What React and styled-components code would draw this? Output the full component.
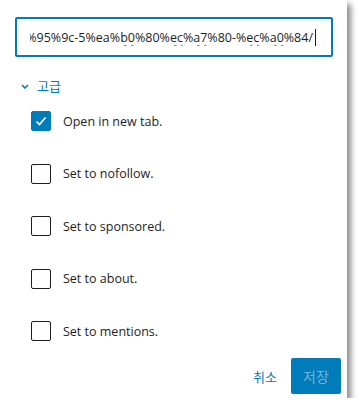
import React, { useState } from "react";
import styled, { createGlobalStyle } from "styled-components";

const GlobalStyle = createGlobalStyle`
  body {
    margin: 0;
    background: #ffffff;
    font-family: "Open Sans", "Noto Sans CJK KR", sans-serif;
    color: #1e1e1e;
  }
`;

const options = [
  { id: "newtab", label: "Open in new tab.", checked: true },
  { id: "nofollow", label: "Set to nofollow.", checked: false },
  { id: "sponsored", label: "Set to sponsored.", checked: false },
  { id: "about", label: "Set to about.", checked: false },
  { id: "mentions", label: "Set to mentions.", checked: false },
];

function App() {
  const [checked, setChecked] = useState(
    options.reduce((acc, o) => ({ ...acc, [o.id]: o.checked }), {})
  );

  return (
    <>
      <GlobalStyle />
      <Card>
        <UrlField>
          <UrlClip>
            <UrlText>
              %ec%95%9c-5%ea%<Typo>b0</Typo>%80%<Typo>ec</Typo>%<Typo>a7</Typo>%80-%
              <Typo>ec</Typo>%<Typo>a0</Typo>%84/
              <Caret />
            </UrlText>
          </UrlClip>
        </UrlField>

        <AdvancedToggle>
          <svg width="8" height="5" viewBox="0 0 8 5">
            <path d="M1 1l3 3 3-3" fill="none" stroke="#007cba" strokeWidth="1.6" />
          </svg>
          고급
        </AdvancedToggle>

        <OptionList>
          {options.map((o) => (
            <OptionRow key={o.id}>
              <CheckBox
                $checked={checked[o.id]}
                onClick={() => setChecked({ ...checked, [o.id]: !checked[o.id] })}
              >
                {checked[o.id] && (
                  <svg width="14" height="14" viewBox="0 0 14 14">
                    <path d="M2.5 7.5l3 3 6-7" fill="none" stroke="#fff" strokeWidth="1.6" />
                  </svg>
                )}
              </CheckBox>
              <OptionLabel>{o.label}</OptionLabel>
            </OptionRow>
          ))}
        </OptionList>

        <Actions>
          <TextButton>취소</TextButton>
          <PrimaryButton disabled>저장</PrimaryButton>
        </Actions>
      </Card>
    </>
  );
}

export default App;

const Card = styled.div`
  width: 347px;
  height: 398px;
  box-sizing: border-box;
  background: #fff;
  box-shadow: 4px 4px 6px rgba(0, 0, 0, 0.45);
  padding: 17px 14px 0 15px;
  display: flex;
  flex-direction: column;
`;

const UrlField = styled.div`
  height: 40px;
  box-sizing: border-box;
  border: 2px solid #007cba;
  border-radius: 2px;
  display: flex;
  align-items: center;
  padding: 0 15px 0 13px;
`;

const UrlClip = styled.div`
  flex: 1;
  overflow: hidden;
  display: flex;
  justify-content: flex-end;
`;

const UrlText = styled.span`
  white-space: nowrap;
  font-size: 12.5px;
  color: #1e1e1e;
  display: inline-flex;
  align-items: center;
`;

const Typo = styled.span`
  text-decoration: underline wavy #e8463f;
  text-decoration-thickness: 1px;
  text-underline-offset: 2px;
`;

const Caret = styled.span`
  display: inline-block;
  width: 1px;
  height: 17px;
  background: #1e1e1e;
  margin-left: 2px;
`;

const AdvancedToggle = styled.div`
  display: flex;
  align-items: center;
  gap: 8px;
  margin-top: 21px;
  padding-left: 6px;
  font-size: 13px;
  color: #007cba;
  cursor: pointer;
  line-height: 16px;
`;

const OptionList = styled.div`
  display: flex;
  flex-direction: column;
  gap: 32.5px;
  margin-top: 17px;
  padding-left: 16px;
`;

const OptionRow = styled.label`
  display: flex;
  align-items: center;
  gap: 12px;
  height: 20px;
`;

const CheckBox = styled.span`
  width: 20px;
  height: 20px;
  box-sizing: border-box;
  border-radius: 2px;
  border: 1px solid ${(p) => (p.$checked ? "#007cba" : "#1e1e1e")};
  background: ${(p) => (p.$checked ? "#007cba" : "#fff")};
  display: flex;
  align-items: center;
  justify-content: center;
  cursor: pointer;
`;

const OptionLabel = styled.span`
  font-size: 12.5px;
  color: #1e1e1e;
`;

const Actions = styled.div`
  display: flex;
  justify-content: flex-end;
  align-items: center;
  gap: 14px;
  margin-top: 17px;
  margin-right: -8px;
`;

const TextButton = styled.button`
  border: none;
  background: none;
  padding: 0;
  font-family: inherit;
  font-size: 13px;
  color: #007cba;
  cursor: pointer;
`;

const PrimaryButton = styled.button`
  width: 50px;
  height: 36px;
  border: none;
  border-radius: 2px;
  background: #007cba;
  color: #74b3da;
  font-family: inherit;
  font-size: 14px;
  padding: 0;
`;
